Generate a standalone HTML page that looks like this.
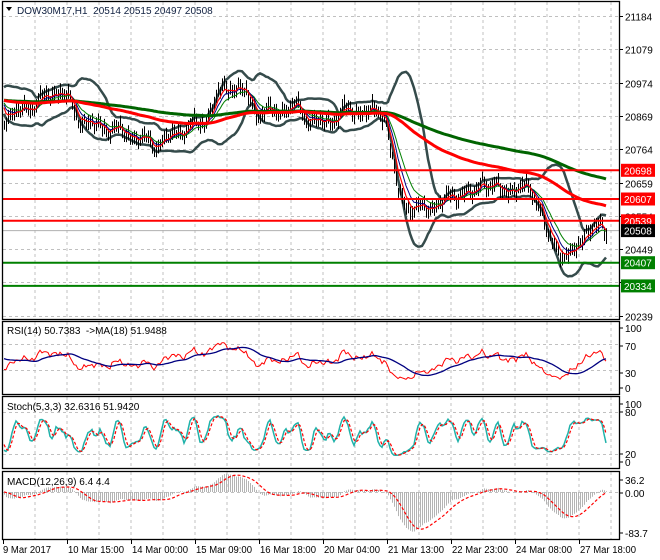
<!DOCTYPE html>
<html><head><meta charset="utf-8"><style>
body{margin:0;background:#fff;width:660px;height:560px;overflow:hidden;font-family:"Liberation Sans",sans-serif}
svg{display:block}
text{font-family:"Liberation Sans",sans-serif;font-size:10px}
</style></head><body>
<svg id="s" width="660" height="560" xmlns="http://www.w3.org/2000/svg">
<rect width="660" height="560" fill="#fff"/>
<g id="grid" stroke="#c0c0c0" stroke-dasharray="3,3" stroke-width="1"></g>
<g id="g"></g>
<g fill="none" stroke="#000" stroke-width="1.3">
<rect x="2.5" y="1.5" width="617" height="318"/>
<rect x="2.5" y="321.5" width="617" height="73"/>
<rect x="2.5" y="396.5" width="617" height="72"/>
<rect x="2.5" y="471.5" width="617" height="68"/>
</g>
<g id="labels"></g>
<polygon points="6,7 12,7 9,11" fill="#000"/>
<text x="17" y="14" fill="#102040">DOW30M17,H1&#160;&#160;20514 20515 20497 20508</text>
<text x="7" y="334">RSI(14) 50.7383&#160;&#160;-&gt;MA(18) 51.9488</text>
<text x="7" y="410">Stoch(5,3,3) 32.6316 51.9420</text>
<text x="7" y="485">MACD(12,26,9) 6.4 4.4</text>
</svg>
<script>
var NS="http://www.w3.org/2000/svg",G=document.getElementById('g'),GR=document.getElementById('grid'),L=document.getElementById('labels');
function el(p,t,a,txt){var e=document.createElementNS(NS,t);for(var k in a)e.setAttribute(k,a[k]);if(txt!=null)e.textContent=txt;p.appendChild(e);return e;}
function yp(p){return 16+(21184-p)*0.3175;} function py(y){return 21184-(y-16)/0.3175;}
for(var k=1;k<=19;k++){var x=3+32*k;[[2,320],[322,394],[397,468],[472,539]].forEach(function(r){el(GR,'line',{x1:x,x2:x,y1:r[0],y2:r[1]});});}
var ticks=[21184,21079,20974,20869,20764,20659,20554,20449,20344,20239];
ticks.forEach(function(t,i){var y=Math.round(16+i*33.3)+.5;el(GR,'line',{x1:3,x2:619,y1:y,y2:y});el(L,'line',{x1:619,x2:623,y1:y,y2:y,stroke:'#000'});el(L,'text',{x:625,y:y+4},t);});
[344,370,412,454,492].forEach(function(a){el(GR,'line',{x1:3,x2:619,y1:a+.5,y2:a+.5});});
[[328,'100'],[346,'70'],[373,'30'],[388,'0'],[404,'100'],[412,'80'],[454,'20'],[462,'0'],[480,'36.2'],[493,'0.00'],[533,'-83.7']].forEach(function(a){el(L,'text',{x:625,y:a[0]+4},a[1]);el(L,'line',{x1:619,x2:623,y1:a[0],y2:a[0],stroke:'#000'});});
var dates=['9 Mar 2017','10 Mar 15:00','14 Mar 00:00','15 Mar 09:00','16 Mar 18:00','20 Mar 04:00','21 Mar 13:00','22 Mar 23:00','24 Mar 08:00','27 Mar 18:00'];
dates.forEach(function(d,i){var x=3+64*i;el(L,'text',{x:x+(i?1:0),y:553,textLength:(i?56:48),lengthAdjust:'spacingAndGlyphs'},d);el(L,'line',{x1:x+.5,x2:x+.5,y1:540,y2:544,stroke:'#000'});});
var cp=[[3,118],[20,112],[40,100],[60,90],[66,95],[75,115],[90,125],[110,128],[130,135],[155,145],[165,140],[185,128],[205,122],[215,98],[230,85],[245,92],[255,112],[275,112],[295,106],[310,120],[325,124],[345,110],[365,112],[385,112],[390,150],[398,190],[405,205],[420,210],[430,207],[445,200],[460,192],[475,195],[483,176],[490,188],[520,190],[530,186],[537,200],[547,235],[560,252],[572,258],[577,245],[585,232],[597,226],[607,232]];
function base(x){for(var i=0;i<cp.length-1;i++){if(x<=cp[i+1][0]){var t=(x-cp[i][0])/(cp[i+1][0]-cp[i][0]);return cp[i][1]+t*(cp[i+1][1]-cp[i][1]);}}return cp[cp.length-1][1];}
var N=302,PRE=220,C=[],H=[],Lo=[],X=[];
for(var i=-PRE;i<N;i++){var x=4+2*i,b=i<0?100:base(x);var n=4*Math.sin(i*1.7)+6*Math.sin(i*0.5+1)+4*Math.sin(i*0.83+2)+2*Math.sin(i*3.1);var yc=b+n*0.7;var r=3+2.5*Math.abs(Math.sin(i*2.3));C.push(py(yc));H.push(py(yc-r-Math.abs(Math.sin(i*1.1))*3));Lo.push(py(yc+r+Math.abs(Math.cos(i*0.9))*3));X.push(x);}
function sma(a,n){var o=[];for(var i=0;i<a.length;i++){var s=0,c=0;for(var j=Math.max(0,i-n+1);j<=i;j++){s+=a[j];c++;}o.push(s/c);}return o;}
function ema(a,n){var o=[],k=2/(n+1),v=a[0];for(var i=0;i<a.length;i++){v=a[i]*k+v*(1-k);o.push(v);}return o;}
function line(arr,fy,col,w,dash){var d='';for(var i=PRE;i<arr.length;i++){d+=(i==PRE?'M':'L')+X[i]+','+fy(arr[i]).toFixed(1);}var a={d:d,fill:'none',stroke:col,'stroke-width':w};if(dash)a['stroke-dasharray']=dash;el(G,'path',a);}
el(G,'line',{x1:3,x2:619,y1:230.6,y2:230.6,stroke:'#b0b0b0'});
var m20=sma(C,20),up=[],dn=[];for(var i=0;i<C.length;i++){var s=0,c=0;for(var j=Math.max(0,i-19);j<=i;j++){s+=(C[j]-m20[i])*(C[j]-m20[i]);c++;}var sd=Math.sqrt(s/c);up.push(m20[i]+2*sd);dn.push(m20[i]-2*sd);}
line(up,yp,'#354b4b',2.5);line(dn,yp,'#354b4b',2.5);
var cd='';for(var i=PRE;i<C.length;i++){cd+='M'+(X[i]+.5)+','+yp(H[i]).toFixed(1)+'V'+yp(Lo[i]).toFixed(1);}
el(G,'path',{d:cd,stroke:'#000','stroke-width':1});
line(ema(C,13),yp,'#008000',1);line(ema(C,8),yp,'#000080',1);line(ema(C,5),yp,'#ff0000',1.2);
line(ema(C,200),yp,'#006400',3);line(ema(C,100),yp,'#ff0000',3);
[[170.3,'#ff0000'],[199,'#ff0000'],[220.8,'#ff0000'],[262.7,'#008000'],[285.9,'#008000']].forEach(function(a){el(G,'line',{x1:3,x2:619,y1:a[0],y2:a[0],stroke:a[1],'stroke-width':2});});
[[170.3,'#ff0000','20698'],[199,'#ff0000','20607'],[220.8,'#ff0000','20539'],[230.6,'#000','20508'],[262.7,'#008000','20407'],[285.9,'#008000','20334']].forEach(function(a){el(L,'rect',{x:621,y:a[0]-6.5,width:34,height:13,fill:a[1]});el(L,'text',{x:624,y:a[0]+4,fill:'#fff'},a[2]);});
var rsi=[],ag=0,al=0;for(var i=0;i<C.length;i++){var d=i?C[i]-C[i-1]:0;ag=(ag*13+Math.max(d,0))/14;al=(al*13+Math.max(-d,0))/14;rsi.push(al==0?50:100-100/(1+ag/al));}
var ry=function(v){return 388-v*0.6;};line(rsi,ry,'#ff0000',1);line(sma(rsi,18),ry,'#000080',1.3);
var kr=[];for(var i=0;i<C.length;i++){var hh=-1e9,ll=1e9;for(var j=Math.max(0,i-4);j<=i;j++){hh=Math.max(hh,H[j]);ll=Math.min(ll,Lo[j]);}kr.push({c:C[i]-ll,r:hh-ll});}
var K=[];for(var i=0;i<C.length;i++){var a=0,b=0;for(var j=Math.max(0,i-2);j<=i;j++){a+=kr[j].c;b+=kr[j].r;}K.push(b?100*a/b:50);}
var sy=function(v){return 462-v*0.58;};line(K,sy,'#20b2aa',1.5);line(sma(K,3),sy,'#ff0000',1.2,'3,2');
var e12=ema(C,12),e26=ema(C,26),mc=[];for(var i=0;i<C.length;i++)mc.push(e12[i]-e26[i]);var sg=sma(mc,9);
var my=function(v){return 492-v*0.49;};var hd='';for(var i=PRE;i<C.length;i++){hd+='M'+(X[i]+.5)+',492V'+my(mc[i]).toFixed(1);}
el(G,'path',{d:hd,stroke:'#b4b4b4','stroke-width':1});line(sg,my,'#ff0000',1.2,'3,2');
</script>
</body></html>
